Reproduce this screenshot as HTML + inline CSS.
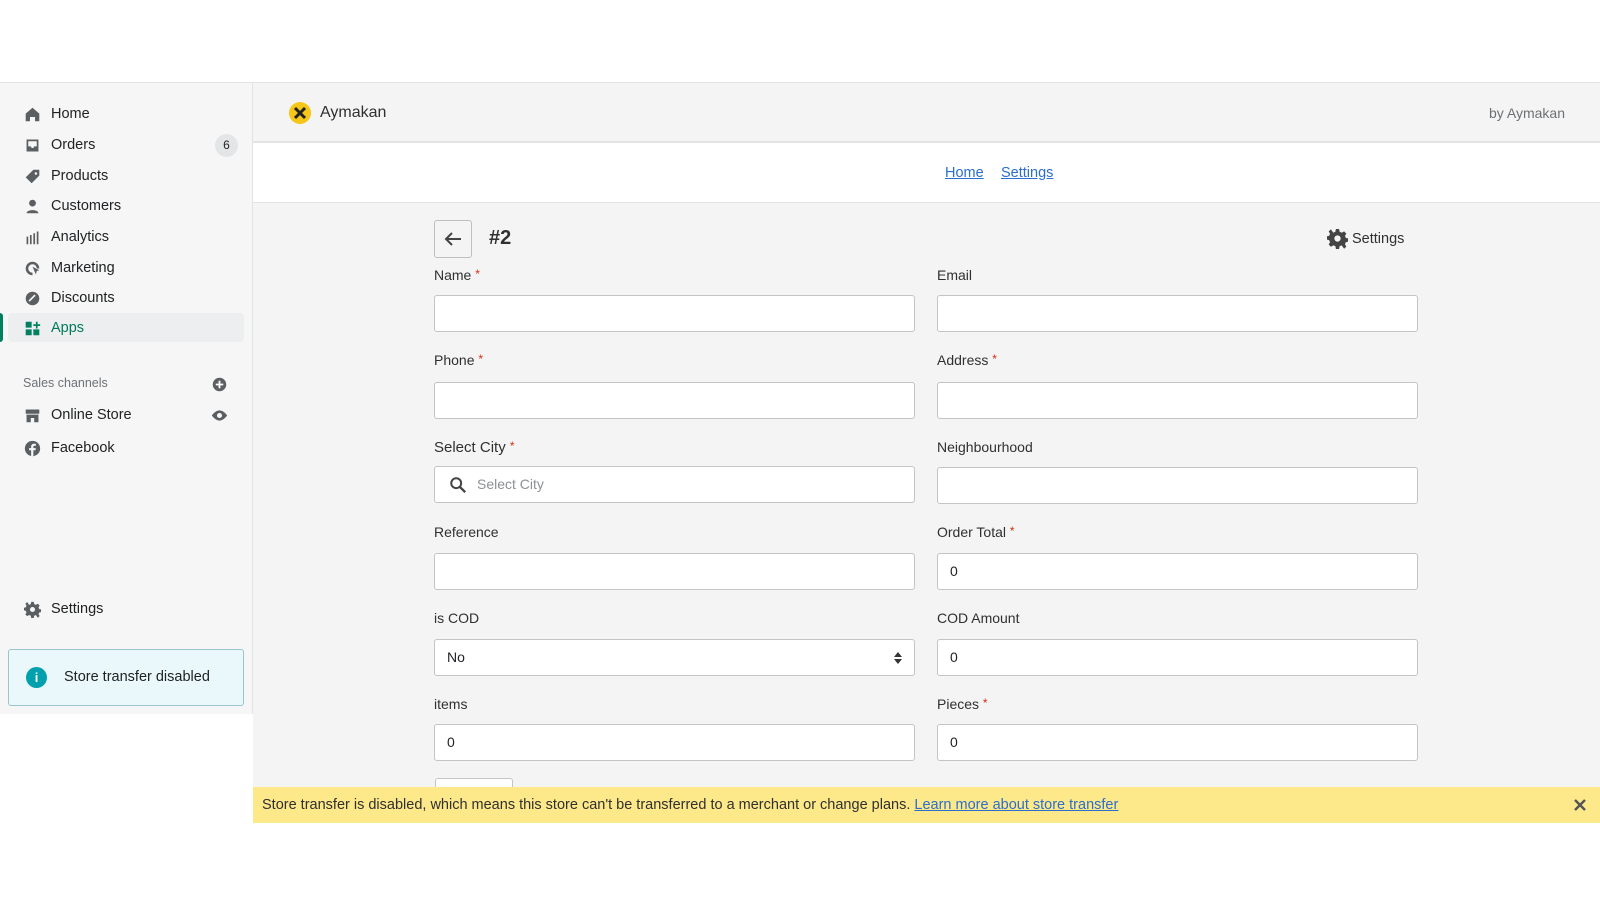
<!DOCTYPE html>
<html><head><meta charset="utf-8"><style>
*{box-sizing:border-box;margin:0;padding:0}
body{width:1600px;height:900px;background:#fff;font-family:"Liberation Sans",sans-serif;color:#202223;position:relative;overflow:hidden;font-size:14px}
.abs{position:absolute}
#side{left:0;top:82px;width:253px;height:632px;background:#f6f6f7;border-right:1px solid #e1e3e5;border-top:1px solid #e1e3e5}
.nav{position:absolute;left:0;width:253px;height:30px;display:flex;align-items:center;font-size:14.5px;color:#202223}
.nav svg{position:absolute;left:24px;width:17px;height:17px;fill:#5c5f62}
.nav span{position:absolute;left:51px}
#main{left:253px;top:82px;width:1347px;height:705px;background:#f4f4f4;border-top:1px solid #e1e3e5}
.lbl{position:absolute;font-size:14px;color:#303030}
.lbl b{color:#d82c0d;font-weight:normal;font-size:12px;vertical-align:top}
.inp{position:absolute;height:37px;background:#fff;border:1px solid #c4c4c4;border-radius:3px;font-size:14px;padding-left:12px;line-height:35px;color:#202223}
</style></head><body>
<div class="abs" id="side">
 <div class="nav" style="top:16px"><svg viewBox="0 0 20 20"><path d="M10 2 2 9v9h5v-5h6v5h5V9z"/></svg><span>Home</span></div>
 <div class="nav" style="top:47px"><svg viewBox="0 0 20 20"><path d="M3 3h14v14H3zM5 5v6h3l1 2h2l1-2h3V5z"/></svg><span>Orders</span>
  <div style="position:absolute;left:215px;width:23px;height:23px;border-radius:12px;background:#e4e5e7;font-size:12px;text-align:center;line-height:23px">6</div></div>
 <div class="nav" style="top:78px"><svg viewBox="0 0 20 20"><path d="M11 2h7v7l-9 9-7-7zM14 5a1.5 1.5 0 1 0 .01 0z"/></svg><span>Products</span></div>
 <div class="nav" style="top:108px"><svg viewBox="0 0 20 20"><circle cx="10" cy="6" r="4"/><path d="M3 18c0-5 14-5 14 0z"/></svg><span>Customers</span></div>
 <div class="nav" style="top:139px"><svg viewBox="0 0 20 20"><path d="M3 9h2v9H3zM7 7h2v11H7zM11 5h2v13h-2zM15 3h2v15h-2z"/></svg><span>Analytics</span></div>
 <div class="nav" style="top:170px"><svg viewBox="0 0 20 20"><path d="M10 2a8 8 0 0 0 0 16v-3a5 5 0 1 1 5-5h3a8 8 0 0 0-8-8zm0 6 8 4-3 1-1 4z"/></svg><span>Marketing</span></div>
 <div class="nav" style="top:200px"><svg viewBox="0 0 20 20"><circle cx="10" cy="10" r="8"/><path d="M6 13 13 6" stroke="#f6f6f7" stroke-width="2"/></svg><span>Discounts</span></div>
 <div style="position:absolute;left:8px;top:230px;width:236px;height:29px;background:#edeeef;border-radius:4px"></div>
 <div style="position:absolute;left:0;top:230px;width:3px;height:29px;background:#008060;border-radius:0 3px 3px 0"></div>
 <div class="nav" style="top:230px;color:#007a5a"><svg viewBox="0 0 20 20" style="fill:#008060"><path d="M2 2h7v7H2zM2 11h7v7H2zM11 11h7v7h-7zM14 2h2v3h3v2h-3v3h-2V7h-3V5h3z"/></svg><span>Apps</span></div>
 <div class="abs" style="left:23px;top:293px;font-size:12.5px;color:#6d7175">Sales channels</div>
 <svg class="abs" style="left:212px;top:294px" width="15" height="15" viewBox="0 0 20 20"><circle cx="10" cy="10" r="9" fill="#5c5f62"/><path d="M10 5v10M5 10h10" stroke="#fff" stroke-width="2.4"/></svg>
 <div class="nav" style="top:317px"><svg viewBox="0 0 20 20"><path d="M2 3h16v5H2zM3 9h14v9h-5v-5H8v5H3z"/></svg><span>Online Store</span>
  <svg viewBox="0 0 20 20" style="left:211px"><path d="M10 4C5 4 1 10 1 10s4 6 9 6 9-6 9-6-4-6-9-6zm0 9a3 3 0 1 1 0-6 3 3 0 0 1 0 6z"/></svg></div>
 <div class="nav" style="top:350px"><svg viewBox="0 0 20 20"><circle cx="10" cy="10" r="9"/><path d="M11 19v-7h2.5l.4-2.5H11V8c0-.8.3-1.3 1.4-1.3H14V4.5c-.3 0-1.2-.1-2.2-.1-2.2 0-3.4 1.3-3.4 3.6v1.5H6V12h2.4v7z" fill="#f6f6f7"/></svg><span>Facebook</span></div>
 <div class="nav" style="top:511px"><svg viewBox="0 0 20 20"><path d="M8.5 1h3l.5 2.5 2 1 2.3-1.3 2.1 2.1-1.3 2.2.9 2 2.5.5v3l-2.5.5-.9 2 1.3 2.2-2.1 2.1L14 16.5l-2 .8-.5 2.7h-3L8 17.3l-2-.8-2.3 1.3-2.1-2.1L2.9 13.5 2 11.5-.5 11V8L2 7.5l.9-2-1.3-2.2 2.1-2.1L6 4.5l2-1zM10 7a3 3 0 1 0 0 6 3 3 0 0 0 0-6z"/></svg><span>Settings</span></div>
 <div class="abs" style="left:8px;top:566px;width:236px;height:57px;background:#eaf8fc;border:1px solid #98c6cd;border-radius:3px">
  <div class="abs" style="left:17px;top:17px;width:21px;height:21px;border-radius:50%;background:#00a0ac;color:#fff;font-weight:bold;font-size:13px;text-align:center;line-height:21px">i</div>
  <div class="abs" style="left:55px;top:19px;font-size:14.5px">Store transfer disabled</div>
 </div>
</div>

<div class="abs" id="main">
 <div class="abs" style="left:0;top:0;width:1347px;height:60px;border-bottom:2px solid #e1e3e5">
  <div class="abs" style="left:36px;top:19px;width:22px;height:22px;border-radius:50%;background:#f5c518"></div>
  <svg class="abs" style="left:38px;top:21px" width="18" height="18" viewBox="0 0 18 18"><path d="M4 4l10 10M14 4 4 14" stroke="#222" stroke-width="3"/></svg>
  <div class="abs" style="left:67px;top:21px;font-size:16px;color:#303030">Aymakan</div>
  <div class="abs" style="right:35px;top:22px;font-size:14px;color:#6d7175">by Aymakan</div>
 </div>
 <div class="abs" style="left:0;top:60px;width:1347px;height:60px;background:#fff;border-bottom:1px solid #e1e3e5">
  <a class="abs" style="left:692px;top:22px;color:#2c6ecb;font-size:14.5px;text-decoration:underline">Home</a>
  <a class="abs" style="left:748px;top:22px;color:#2c6ecb;font-size:14.5px;text-decoration:underline">Settings</a>
 </div>
 <div class="abs" style="left:181px;top:137px;width:38px;height:38px;border:1px solid #bfbfbf;border-radius:3px;background:#f4f4f4">
  <svg width="36" height="36" viewBox="0 0 36 36"><path d="M26 18H11M17 12l-6 6 6 6" stroke="#444" stroke-width="2" fill="none"/></svg></div>
 <div class="abs" style="left:236px;top:144px;font-size:20px;font-weight:bold;color:#303030">#2</div>
 <svg class="abs" style="left:1074px;top:145px" width="21" height="21" viewBox="0 0 20 20"><path fill="#444" d="M8.5 1h3l.5 2.5 2 1 2.3-1.3 2.1 2.1-1.3 2.2.9 2 2.5.5v3l-2.5.5-.9 2 1.3 2.2-2.1 2.1L14 16.5l-2 .8-.5 2.7h-3L8 17.3l-2-.8-2.3 1.3-2.1-2.1L2.9 13.5 2 11.5-.5 11V8L2 7.5l.9-2-1.3-2.2 2.1-2.1L6 4.5l2-1zM10 7a3 3 0 1 0 0 6 3 3 0 0 0 0-6z"/></svg>
 <div class="abs" style="left:1099px;top:148px;font-size:14.5px;color:#303030">Settings</div>
</div>

<div class="lbl" style="left:434px;top:267px">Name <b>*</b></div>
<div class="inp" style="left:434px;top:295px;width:481px"></div>
<div class="lbl" style="left:937px;top:267px">Email</div>
<div class="inp" style="left:937px;top:295px;width:481px"></div>

<div class="lbl" style="left:434px;top:352px">Phone <b>*</b></div>
<div class="inp" style="left:434px;top:382px;width:481px"></div>
<div class="lbl" style="left:937px;top:352px">Address <b>*</b></div>
<div class="inp" style="left:937px;top:382px;width:481px"></div>

<div class="lbl" style="left:434px;top:439px;font-size:15px">Select City <b>*</b></div>
<div class="inp" style="left:434px;top:466px;width:481px;padding-left:42px;color:#8c9196">
 <svg class="abs" style="left:14px;top:9px" width="18" height="18" viewBox="0 0 20 20"><circle cx="8" cy="8" r="5.5" stroke="#444" stroke-width="2.2" fill="none"/><path d="M12 12l6 6" stroke="#444" stroke-width="2.6"/></svg>Select City</div>
<div class="lbl" style="left:937px;top:439px">Neighbourhood</div>
<div class="inp" style="left:937px;top:467px;width:481px"></div>

<div class="lbl" style="left:434px;top:524px">Reference</div>
<div class="inp" style="left:434px;top:553px;width:481px"></div>
<div class="lbl" style="left:937px;top:524px">Order Total <b>*</b></div>
<div class="inp" style="left:937px;top:553px;width:481px">0</div>

<div class="lbl" style="left:434px;top:610px">is COD</div>
<div class="inp" style="left:434px;top:639px;width:481px">No
 <svg class="abs" style="right:12px;top:12px" width="8" height="12" viewBox="0 0 8 12"><path d="M4 0 8 5H0zM4 12 0 7h8z" fill="#333"/></svg></div>
<div class="lbl" style="left:937px;top:610px">COD Amount</div>
<div class="inp" style="left:937px;top:639px;width:481px">0</div>

<div class="lbl" style="left:434px;top:696px">items</div>
<div class="inp" style="left:434px;top:724px;width:481px">0</div>
<div class="lbl" style="left:937px;top:696px">Pieces <b>*</b></div>
<div class="inp" style="left:937px;top:724px;width:481px">0</div>

<div class="abs" style="left:435px;top:778px;width:78px;height:20px;border:1px solid #c4c4c4;border-bottom:none;border-radius:3px 3px 0 0;background:#fff"></div>

<div class="abs" style="left:253px;top:787px;width:1347px;height:36px;background:#fde88a;font-size:14.5px;line-height:36px;padding-left:9px;color:#303030">Store transfer is disabled, which means this store can't be transferred to a merchant or change plans. <a style="color:#2c6ecb;text-decoration:underline">Learn more about store transfer</a>
 <svg class="abs" style="left:1321px;top:12px" width="12" height="12" viewBox="0 0 12 12"><path d="M1 1l10 10M11 1 1 11" stroke="#555" stroke-width="2.4"/></svg></div>
</body></html>
